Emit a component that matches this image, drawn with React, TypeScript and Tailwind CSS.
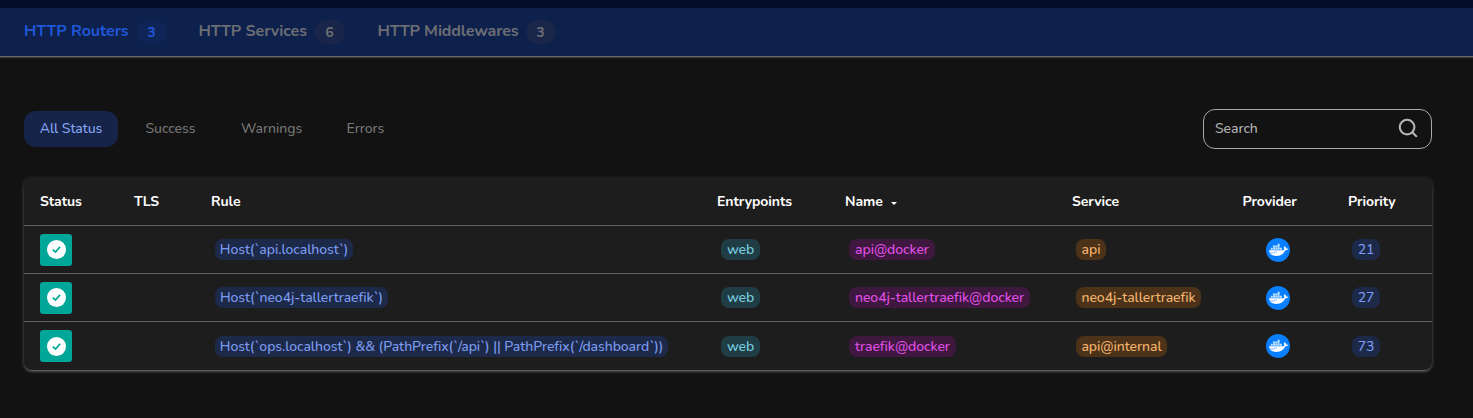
import { FiSearch } from "react-icons/fi";

const tabs = [
  { label: "HTTP Routers", count: 3, active: true, width: "w-[174.5px]", text: "w-[113px]" },
  { label: "HTTP Services", count: 6, active: false, width: "w-[179px]", text: "w-[116.5px]" },
  { label: "HTTP Middlewares", count: 3, active: false, width: "w-[180px]", text: "w-[148.5px] tracking-[-0.12px]" },
];

const filters = [
  { label: "Success", box: "ml-[27.5px] w-[95.5px]" },
  { label: "Warnings", box: "w-[105.5px]" },
  { label: "Errors", box: "w-[60px]" },
];

const rows = [
  {
    rule: "Host(`api.localhost`)", ruleBox: "w-[138px]",
    name: "api@docker", nameBox: "w-[86px]",
    service: "api", serviceBox: "w-[30px]",
    priority: 21, height: "h-[48px]", pad: "",
  },
  {
    rule: "Host(`neo4j-tallertraefik`)", ruleBox: "w-[173px]",
    name: "neo4j-tallertraefik@docker", nameBox: "w-[181px]",
    service: "neo4j-tallertraefik", serviceBox: "w-[125px]",
    priority: 27, height: "h-[48px]", pad: "",
  },
  {
    rule: "Host(`ops.localhost`) && (PathPrefix(`/api`) || PathPrefix(`/dashboard`))", ruleBox: "w-[453px]",
    name: "traefik@docker", nameBox: "w-[107px]",
    service: "api@internal", serviceBox: "w-[91px]",
    priority: 73, height: "h-[49px]", pad: "pt-px",
  },
];

const columns = "grid grid-cols-[94px_77px_506px_128px_227px_170px_106px_84px] pl-4";

function Chip({ text, className }: { text: string | number; className: string }) {
  return (
    <span className={`ml-1 flex h-[21px] items-center justify-center rounded-lg whitespace-nowrap ${className}`}>
      {text}
    </span>
  );
}

function DockerIcon() {
  return (
    <svg className="size-6" viewBox="0 0 24 24">
      <circle cx="12" cy="12" r="12" fill="#087fff" />
      <g fill="white">
        <path d="M3 12.2h14.2c.7 0 1-.3 1.2-.7-.7-1-.6-2.2.2-3.2 1 .6 1.4 1.4 1.4 2.2.8-.1 1.5 0 2 .4-.5 1.2-1.6 1.5-2.7 1.4-1.5 3.800-4.700 5.700-8.600 5.700-3.100 0-5.500-.9-6.700-2.700C3.400 14.200 3 13.200 3 12.200z" />
        <path d="M4.700 9.800h2v2h-2zM7 9.800h2v2H7zM9.300 9.800h2v2h-2zM11.600 9.800h2v2h-2zM13.900 9.800h2v2h-2zM7 7.600h2v2H7zM9.300 7.600h2v2h-2zM11.600 7.600h2v2h-2zM11.600 5.800h2v1.600h-2z" opacity=".75" />
      </g>
      <path d="M3.500 14.800c2.800.5 5.300.1 7.200-1.300" fill="none" stroke="#087fff" strokeWidth=".5" />
    </svg>
  );
}

export default function App() {
  return (
    <div className="flex h-[418px] w-full flex-col overflow-hidden bg-[#121212] font-[Nunito,Lato,sans-serif] text-[14px] leading-[21px] font-medium tracking-[-0.05px]">
      <div className="h-2 shrink-0 bg-[#040e28]" />
      <nav className="flex h-[49px] shrink-0 border-b border-[#686868] bg-[#0e204c] pl-6 text-[16px] font-bold shadow-[0_1px_1px_rgba(255,255,255,0.16)]">
        {tabs.map((tab) => (
          <div key={tab.label} className={`flex items-center whitespace-nowrap ${tab.width} ${tab.active ? "text-[#1f57d8]" : "text-[#6c6e74]"}`}>
            <span className={`-mt-[2px] shrink-0 ${tab.text}`}>{tab.label}</span>
            <span className={`flex h-6 w-[30px] shrink-0 items-center justify-center rounded-xl pr-px text-[14px] ${tab.active ? "bg-[#0f2558]" : "bg-[#19264a]"}`}>
              {tab.count}
            </span>
          </div>
        ))}
      </nav>

      <main className="flex flex-col px-6 pt-[52px]">
        <div className="flex h-10 w-[1408px] items-center text-[#767676]">
          <button className="flex h-9 w-[94px] items-center justify-center rounded-xl bg-[#17244a] pb-[2px] text-[#86a5f5]">All Status</button>
          {filters.map((filter) => (
            <button key={filter.label} className={`pb-[2px] text-left ${filter.box}`}>{filter.label}</button>
          ))}
          <label className="ml-auto flex h-10 w-[229px] items-center justify-between rounded-xl border border-[#a8a8a8] pr-3 pl-[11px] text-[#b2b2b2]">
            <span className="pb-[2px]">Search</span>
            <FiSearch size={22} strokeWidth={2.3} className="-mt-[2px] text-[#b5b5b5]" />
          </label>
        </div>

        <section className="mt-[29px] w-[1408px] rounded-lg bg-[#1d1d1d] shadow-[0_1px_4px_rgba(255,255,255,0.2),0_2px_2px_rgba(255,255,255,0.14),0_3px_1px_-2px_rgba(255,255,255,0.12)]">
          <header className={`${columns} h-[47px] items-center font-bold text-white`}>
            <span>Status</span>
            <span>TLS</span>
            <span>Rule</span>
            <span>Entrypoints</span>
            <span className="flex items-center">
              Name
              <svg className="ml-2 mt-[3px] h-[3px] w-[6px]" viewBox="0 0 6 3" fill="currentColor"><path d="M0 0h6L3 3z" /></svg>
            </span>
            <span>Service</span>
            <span className="pl-[0.5px]">Provider</span>
            <span>Priority</span>
          </header>
          {rows.map((row) => (
            <div key={row.rule} className={`${columns} ${row.height} items-center border-t border-[#616161]`}>
              <span className="flex size-8 items-center justify-center rounded-[3px] bg-[#00a697]">
                <svg className="ml-px size-[19px]" viewBox="0 0 19 19" fill="none">
                  <circle cx="9.5" cy="9.5" r="9.5" fill="white" />
                  <path d="M5.800 9.600l2.700 2.500 4.600-5.300" stroke="#00a697" strokeWidth="1.700" />
                </svg>
              </span>
              <span />
              <span className={`flex ${row.pad}`}><Chip text={row.rule} className={`bg-[#1d2949] text-[#7c9cf0] ${row.ruleBox}`} /></span>
              <span className={`flex ${row.pad}`}><Chip text="web" className="w-[39px] bg-[#203c44] text-[#79d0e1]" /></span>
              <span className={`flex ${row.pad}`}><Chip text={row.name} className={`bg-[#3e183f] text-[#e150e6] ${row.nameBox}`} /></span>
              <span className={`flex ${row.pad}`}><Chip text={row.service} className={`bg-[#4b3219] text-[#f4b56d] ${row.serviceBox}`} /></span>
              <span className="ml-6 flex"><DockerIcon /></span>
              <span className={`flex ${row.pad}`}><Chip text={row.priority} className="w-[28px] bg-[#1d2949] text-[#7c9cf0]" /></span>
            </div>
          ))}
        </section>
      </main>
    </div>
  );
}
